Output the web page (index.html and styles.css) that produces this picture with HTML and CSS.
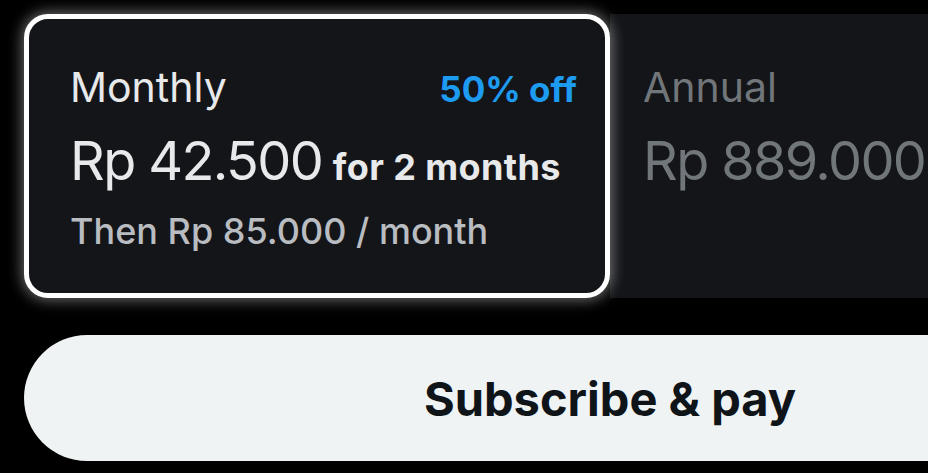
FILE: index.html
```html
<!DOCTYPE html>
<html lang="en">
<head>
<meta charset="utf-8">
<link rel="stylesheet" href="styles.css">
</head>
<body>
<div class="page">
  <div class="plans">
    <div class="plan plan-selected">
      <div class="plan-head">
        <span class="plan-name">Monthly</span>
        <span class="plan-badge">50% off</span>
      </div>
      <div class="plan-price">Rp 42.500 <span class="plan-term">for 2 months</span></div>
      <div class="plan-note">Then Rp 85.000 / month</div>
    </div>
    <div class="plan plan-other">
      <div class="plan-head">
        <span class="plan-name">Annual</span>
      </div>
      <div class="plan-price">Rp 889.000</div>
    </div>
  </div>
  <button class="subscribe">Subscribe &amp; pay</button>
</div>
</body>
</html>
```
FILE: styles.css
```css
html, body {
  margin: 0;
  padding: 0;
  background: #000;
  overflow: hidden;
}
.page {
  width: 1172px;
  padding: 14px 0 0 24px;
  font-family: Inter, "Liberation Sans", sans-serif;
  color: #e7e9ea;
}
.plans {
  display: flex;
  height: 284px;
}
.plan {
  box-sizing: border-box;
  background: #141519;
}
.plan-selected {
  width: 586px;
  flex: none;
  border: 5px solid #fff;
  border-radius: 24px;
  box-shadow: 0 0 14px 2px rgba(255, 255, 255, 0.42);
  padding: 49px 28px 0 41px;
  position: relative;
  z-index: 1;
}
.plan-other {
  flex: 1;
  padding: 54px 0 0 33px;
  color: #71767b;
}
.plan-head {
  display: flex;
  justify-content: space-between;
  align-items: baseline;
  height: 38px;
}
.plan-name {
  font-size: 41px;
  line-height: 38px;
  font-weight: 400;
}
.plan-badge {
  font-size: 35px;
  line-height: 38px;
  font-weight: 700;
  color: #1d9bf0;
}
.plan-price {
  margin-top: 28px;
  font-size: 54px;
  line-height: 54px;
  font-weight: 400;
  letter-spacing: -1.6px;
  white-space: nowrap;
}
.plan-term {
  font-size: 36px;
  font-weight: 700;
  letter-spacing: 0.4px;
  margin-left: -3px;
}
.plan-note {
  margin-top: 19px;
  font-size: 36px;
  line-height: 36px;
  font-weight: 500;
  color: #b9bcc0;
}
.subscribe {
  display: block;
  margin-top: 37px;
  width: 1172px;
  height: 126px;
  border: 0;
  border-radius: 63px;
  background: #eff3f4;
  color: #0f1419;
  font-family: Inter, "Liberation Sans", sans-serif;
  font-size: 47px;
  font-weight: 700;
  padding: 0;
}
```
